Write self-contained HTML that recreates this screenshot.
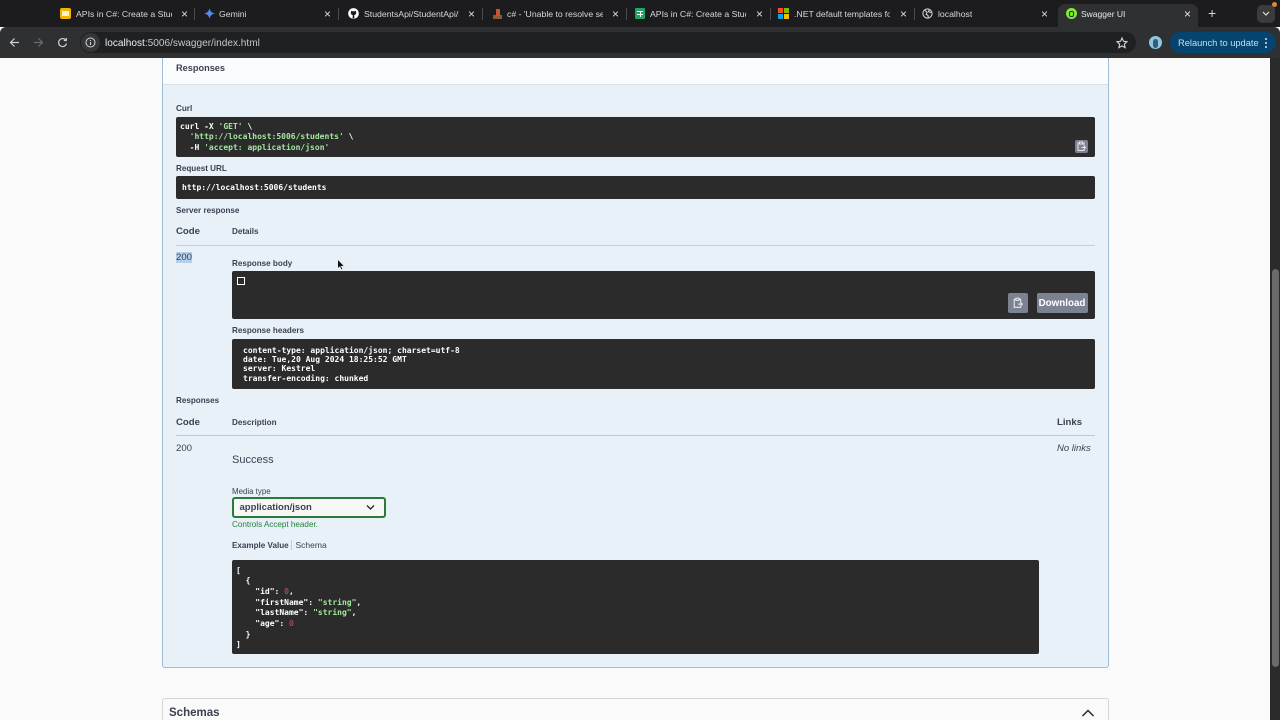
<!DOCTYPE html>
<html><head><meta charset="utf-8"><title>Swagger UI</title>
<style>
html,body{margin:0;padding:0;background:#fafafa;width:1280px;height:720px;overflow:hidden}
body{position:relative;font-family:"Liberation Sans",sans-serif;color:#3b4151}
#w{left:0;top:0;width:1280px;height:720px;overflow:hidden;filter:blur(.3px)}
div,span.a,svg.a{position:absolute}
.t{white-space:nowrap;line-height:12px}
.tab{color:#d8d9db;font-size:8.7px;top:8px;white-space:nowrap;overflow:hidden;line-height:12px}
.x{color:#dcdcdc;font-size:12px;top:7.500px;line-height:13px}
.sep{top:8px;width:1px;height:12px;background:#4a4b4d}
.b{background:#2b2b2b;border-radius:2px}
.m{font-family:"DejaVu Sans Mono",monospace;font-size:8px;white-space:pre;color:#fff;font-weight:bold}
.g{color:#a2e89e;font-weight:bold}
.r{color:#d3545b;font-weight:normal}
.l{font-size:8.100px;font-weight:bold;color:#3b4151}
.c{font-size:9.600px;font-weight:bold;color:#3b4151}
.btn{background:#7d8293;border-radius:2px}
</style></head><body><div id="w">
<!-- page -->
<div style="left:162px;top:58px;width:945px;height:609px;background:#e8f0f8;border:1px solid #9fbdd8;border-top:0;border-radius:0 0 3px 3px"></div>
<div style="left:163px;top:58px;width:945px;height:26px;background:#fbfcfd;border-bottom:1px solid #d8dfe6"></div>
<div class="t" style="left:176px;top:62px;font-size:9.200px;font-weight:bold">Responses</div>

<div class="t l" style="left:176px;top:103px">Curl</div>
<div class="b" style="left:176px;top:117px;width:918.500px;height:40px"></div>
<div class="m" style="left:180px;top:121.700px;line-height:10.400px">curl -X <span class="g">'GET'</span> \
  <span class="g">'http://localhost:5006/students'</span> \
  -H <span class="g">'accept: application/json'</span></div>
<div class="btn" style="left:1075px;top:140px;width:13px;height:13px"></div>
<svg class="a" style="left:1075px;top:140px" width="13" height="13" viewBox="0 0 13 13" fill="none" stroke="#e8e8ea" stroke-width="1"><path d="M4 3H3v7.500h6V9M9 6V3H8M4.500 2h3v2h-3zM6.500 7.500h4M9 6l1.500 1.500L9 9"/></svg>

<div class="t l" style="left:176px;top:163px">Request URL</div>
<div class="b" style="left:176px;top:176px;width:918.500px;height:23px"></div>
<div class="m" style="left:182px;top:181.800px;line-height:12px">http://localhost:5006/students</div>

<div class="t l" style="left:176px;top:205px">Server response</div>
<div class="t c" style="left:176px;top:226px">Code</div>
<div class="t l" style="left:232px;top:226px">Details</div>
<div style="left:176px;top:245px;width:918.500px;height:1px;background:#c9ced4"></div>
<div class="t" style="left:176px;top:252px;font-size:9.600px;background:#b4cfe9;height:11px;line-height:11px">200</div>

<div class="t l" style="left:232px;top:258px">Response body</div>
<div class="b" style="left:232px;top:271px;width:862.500px;height:48px"></div>
<div style="left:236.500px;top:276.500px;width:6px;height:6.500px;border:1px solid #fff"></div>
<div class="btn" style="left:1008px;top:293px;width:20px;height:20px"></div>
<svg class="a" style="left:1011px;top:296px" width="14" height="14" viewBox="0 0 13 13" fill="none" stroke="#e8e8ea" stroke-width="1"><path d="M4 3H3v7.500h6V9M9 6V3H8M4.500 2h3v2h-3zM6.500 7.500h4M9 6l1.500 1.500L9 9"/></svg>
<div class="btn" style="left:1037px;top:293px;width:51px;height:20px"></div>
<div class="t" style="left:1037px;top:298px;width:50px;text-align:center;font-size:9.800px;font-weight:bold;color:#fff">Download</div>

<div class="t l" style="left:232px;top:325px">Response headers</div>
<div class="b" style="left:232px;top:339px;width:862.500px;height:50px"></div>
<div class="m" style="left:243px;top:345.700px;line-height:9.300px">content-type: application/json; charset=utf-8
date: Tue,20 Aug 2024 18:25:52 GMT
server: Kestrel
transfer-encoding: chunked</div>

<div class="t l" style="left:176px;top:394.500px">Responses</div>
<div class="t c" style="left:176px;top:417px">Code</div>
<div class="t l" style="left:232px;top:416.500px">Description</div>
<div class="t c" style="left:1057px;top:417px">Links</div>
<div style="left:176px;top:435px;width:918.500px;height:1px;background:#bcc8d3"></div>
<div class="t" style="left:176px;top:443px;font-size:9.600px">200</div>
<div class="t" style="left:1057px;top:443px;font-size:9.500px;font-style:italic">No links</div>
<div class="t" style="left:232px;top:454px;font-size:11px">Success</div>

<div class="t" style="left:232px;top:485.500px;font-size:7.900px">Media type</div>
<div style="left:232px;top:497px;width:149.500px;height:17px;background:#f7f7f7;border:2px solid #2b7a38;border-radius:3px;box-sizing:content-box"></div>
<div class="t" style="left:239.500px;top:502px;font-size:9.500px;font-weight:bold">application/json</div>
<svg class="a" style="left:366px;top:504px" width="9" height="7" viewBox="0 0 9 7" fill="none" stroke="#222" stroke-width="1.300"><path d="M1 1.500l3.500 3.500L8 1.500"/></svg>
<div class="t" style="left:232px;top:518.500px;font-size:8.100px;color:#25803a">Controls Accept header.</div>
<div class="t l" style="left:232px;top:539.500px">Example Value</div>
<div style="left:291px;top:540px;width:1px;height:10px;background:#c5ccd3"></div>
<div class="t" style="left:295.500px;top:538.500px;font-size:8.500px">Schema</div>
<div class="b" style="left:232px;top:560px;width:806.500px;height:94px"></div>
<div class="m" style="left:236px;top:565.500px;line-height:10.700px">[
  {
    "id": <span class="r">0</span>,
    "firstName": <span class="g">"string"</span>,
    "lastName": <span class="g">"string"</span>,
    "age": <span class="r">0</span>
  }
]</div>

<div style="left:162px;top:698px;width:945px;height:30px;background:#fafafa;border:1px solid #d4d6d8;border-radius:3px"></div>
<div class="t" style="left:169px;top:707px;font-size:11.500px;font-weight:bold">Schemas</div>
<svg class="a" style="left:1081px;top:708px" width="14" height="9" viewBox="0 0 14 9" fill="none" stroke="#222" stroke-width="1.400"><path d="M1.500 8L7 2.500 12.500 8"/></svg>

<!-- scrollbar -->
<div style="left:1270px;top:58px;width:10px;height:662px;background:#2b2b2b"></div>
<div style="left:1272px;top:269px;width:7px;height:398px;background:#6a6a6a;border-radius:4px"></div>
<!-- cursor -->
<svg class="a" style="left:337px;top:259px" width="8" height="12" viewBox="0 0 8 12"><path d="M.7.500v9l2.200-2 1.400 3.300 1.300-.5-1.400-3.200h3z" fill="#111" stroke="#fff" stroke-width=".5"/></svg>

<!-- chrome -->
<div style="left:0;top:0;width:1280px;height:27px;background:#1c1c1e"></div>
<div style="left:0;top:27px;width:1280px;height:31px;background:#2f3032;border-radius:6px 6px 0 0"></div>
<div style="left:1058px;top:4px;width:140px;height:24px;background:#2f3032;border-radius:7px 7px 0 0"></div>

<div style="left:60px;top:8px;width:11px;height:11px;background:#f4b400;border-radius:2px"></div>
<div style="left:62px;top:11px;width:7px;height:5px;background:#fff3cf"></div>
<div class="tab" style="left:76px;width:96px">APIs in C#: Create a Stud</div>
<div class="x" style="left:181px">×</div><div class="sep" style="left:194px"></div>
<svg class="a" style="left:204px;top:8px" width="11" height="11" viewBox="0 0 12 12"><path d="M6 0c.5 3.500 2.500 5.500 6 6-3.500.5-5.500 2.500-6 6-.5-3.500-2.500-5.500-6-6 3.500-.5 5.500-2.500 6-6z" fill="#4a8cf0"/></svg>
<div class="tab" style="left:219px">Gemini</div>
<div class="x" style="left:324px">×</div><div class="sep" style="left:338px"></div>
<svg class="a" style="left:348px;top:8px" width="11" height="11" viewBox="0 0 12 12"><circle cx="6" cy="6" r="5.800" fill="#fff"/><path d="M3.200 4.500L3.500 3 5 3.600h2L8.500 3l.3 1.500c.5 1.800-.5 3-2 3.200l.2 3.800H5l.2-3.800c-1.500-.2-2.500-1.400-2-3.200z" fill="#1c1c1e"/></svg>
<div class="tab" style="left:364px;width:95px">StudentsApi/StudentApi/I</div>
<div class="x" style="left:468px">×</div><div class="sep" style="left:482px"></div>
<div style="left:493px;top:15px;width:9px;height:4px;background:#8a5a30"></div>
<div style="left:496px;top:9px;width:4px;height:7px;background:#c8552a"></div>
<div class="tab" style="left:507px;width:96px">c# - 'Unable to resolve se</div>
<div class="x" style="left:612px">×</div><div class="sep" style="left:626px"></div>
<div style="left:635px;top:8px;width:10px;height:11px;background:#20a464;border-radius:1px"></div>
<div style="left:637px;top:11px;width:6px;height:1px;background:#fff"></div>
<div style="left:637px;top:14px;width:6px;height:1px;background:#fff"></div>
<div style="left:640px;top:11px;width:1px;height:6px;background:#fff"></div>
<div class="tab" style="left:650px;width:96px">APIs in C#: Create a Stud</div>
<div class="x" style="left:756px">×</div><div class="sep" style="left:770px"></div>
<div style="left:778px;top:8px;width:5px;height:5px;background:#f25022"></div>
<div style="left:784px;top:8px;width:5px;height:5px;background:#7fba00"></div>
<div style="left:778px;top:14px;width:5px;height:5px;background:#00a4ef"></div>
<div style="left:784px;top:14px;width:5px;height:5px;background:#ffb900"></div>
<div class="tab" style="left:794px;width:96px">.NET default templates fo</div>
<div class="x" style="left:900px">×</div><div class="sep" style="left:914px"></div>
<svg class="a" style="left:922px;top:8px" width="11" height="11" viewBox="0 0 12 12" fill="none" stroke="#d0d0d0" stroke-width="1.200"><circle cx="6" cy="6" r="5"/><path d="M3 2.500l2.500 2-1 2.500 2 1 .5 3M8 1.500L7 4l3 1"/></svg>
<div class="tab" style="left:938px">localhost</div>
<div class="x" style="left:1041px">×</div>
<div style="left:1066px;top:8px;width:11px;height:11px;background:#85ea2d;border-radius:50%"></div>
<div style="left:1069px;top:10.500px;width:5px;height:6px;border:1px solid #173647;border-radius:2px;box-sizing:border-box"></div>
<div class="tab" style="left:1081px;color:#e8e9eb;font-size:8.500px">Swagger UI</div>
<div class="x" style="left:1184px;color:#e5e5e5">×</div>
<div class="t" style="left:1208px;top:7px;font-size:14px;color:#d5d5d5">+</div>
<div style="left:1257px;top:5px;width:18px;height:18px;background:#3a3b3d;border-radius:5px"></div>
<svg class="a" style="left:1262px;top:11px" width="8" height="6" viewBox="0 0 8 6" fill="none" stroke="#ddd" stroke-width="1.200"><path d="M1 1l3 3 3-3"/></svg>
<div style="left:1272px;top:2px;width:5px;height:5px;background:#d98a3a;border-radius:50%"></div>

<svg class="a" style="left:9px;top:37px" width="11" height="11" viewBox="0 0 11 11" fill="none" stroke="#cfd0d2" stroke-width="1.200"><path d="M10 5.500H1.500M5.500 1.500l-4 4 4 4"/></svg>
<svg class="a" style="left:33px;top:37px" width="11" height="11" viewBox="0 0 11 11" fill="none" stroke="#6b6c6e" stroke-width="1.200"><path d="M1 5.500h8.500M5.500 1.500l4 4-4 4"/></svg>
<svg class="a" style="left:57px;top:37px" width="11" height="11" viewBox="0 0 11 11" fill="none" stroke="#cfd0d2" stroke-width="1.200"><path d="M9.500 6.500a4 4 0 1 1-.8-3.500M9.300 1v2.500H6.800"/></svg>
<div style="left:80px;top:32px;width:1056px;height:21px;background:#1f2022;border-radius:11px"></div>
<div style="left:81px;top:33px;width:19px;height:19px;background:#353638;border-radius:50%"></div>
<svg class="a" style="left:85px;top:37px" width="11" height="11" viewBox="0 0 11 11" fill="none" stroke="#d5d5d5" stroke-width="1"><circle cx="5.500" cy="5.500" r="4.500"/><path d="M5.500 5v3M5.500 3v1"/></svg>
<div class="t" style="left:105px;top:38px;font-size:10.100px;color:#eceded">localhost<span style="color:#c5c6c8">:5006/swagger/index.html</span></div>
<svg class="a" style="left:1116px;top:37px" width="12" height="12" viewBox="0 0 12 12" fill="none" stroke="#d8d8d8" stroke-width="1.100"><path d="M6 1l1.500 3.300 3.500.4-2.600 2.400.7 3.600L6 8.900l-3.100 1.800.7-3.600L1 4.700l3.500-.4z"/></svg>
<div style="left:1149px;top:36px;width:13px;height:13px;background:#8fc6e0;border-radius:50%"></div>
<div style="left:1153px;top:39px;width:5px;height:9px;background:#2f5f7a;border-radius:3px"></div>
<div style="left:1170px;top:32px;width:106px;height:21px;background:#04446e;border-radius:11px"></div>
<div class="t" style="left:1178px;top:37px;font-size:9.300px;color:#bfe0f5">Relaunch to update</div>
<div style="left:1265px;top:38px;width:2px;height:2px;background:#cfe6f5;border-radius:50%;box-shadow:0 4px 0 #cfe6f5,0 8px 0 #cfe6f5"></div>
</div></body></html>
